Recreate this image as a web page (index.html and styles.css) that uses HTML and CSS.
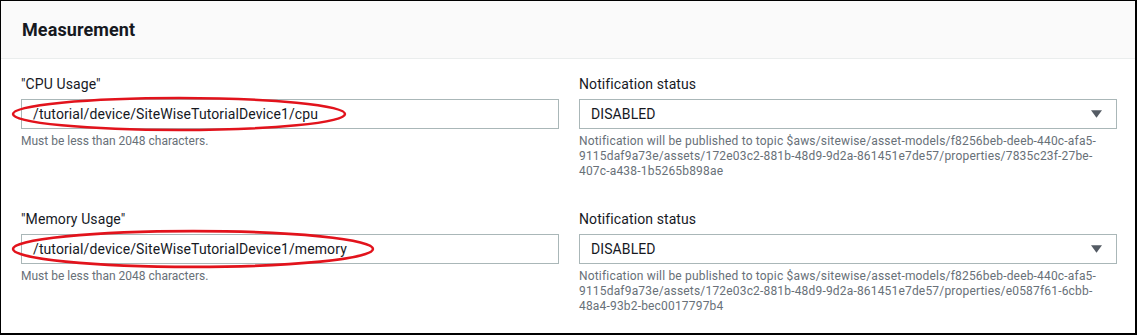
FILE: index.html
```html
<!DOCTYPE html>
<html lang="en">
<head>
    <meta charset="UTF-8">
    <title>Measurement</title>
    <link rel="stylesheet" href="styles.css">
</head>
<body>
    <div class="frame">
        <div class="panel-header">
            <h2>Measurement</h2>
        </div>
        <div class="panel-body">
            <div class="row">
                <div class="field">
                    <label>"CPU Usage"</label>
                    <div class="input-wrap">
                        <div class="text-input">/tutorial/device/SiteWiseTutorialDevice1/cpu</div>
                        <svg class="mark mark-cpu" viewBox="0 0 336 36" preserveAspectRatio="none">
                            <ellipse cx="168" cy="18" rx="166" ry="16" />
                        </svg>
                    </div>
                    <div class="hint">Must be less than 2048 characters.</div>
                </div>
                <div class="field">
                    <label>Notification status</label>
                    <div class="select">
                        <span>DISABLED</span>
                        <svg class="caret" viewBox="0 0 12 8"><path d="M0 0h12L6 8z" /></svg>
                    </div>
                    <div class="hint topic">Notification will be published to topic $aws/sitewise/asset-models/f8256beb-deeb-440c-afa5-9115daf9a73e/assets/172e03c2-881b-48d9-9d2a-861451e7de57/properties/7835c23f-27be-407c-a438-1b5265b898ae</div>
                </div>
            </div>
            <div class="row">
                <div class="field">
                    <label>"Memory Usage"</label>
                    <div class="input-wrap">
                        <div class="text-input">/tutorial/device/SiteWiseTutorialDevice1/memory</div>
                        <svg class="mark mark-mem" viewBox="0 0 364 38" preserveAspectRatio="none">
                            <ellipse cx="182" cy="19" rx="180" ry="17" />
                        </svg>
                    </div>
                    <div class="hint">Must be less than 2048 characters.</div>
                </div>
                <div class="field">
                    <label>Notification status</label>
                    <div class="select">
                        <span>DISABLED</span>
                        <svg class="caret" viewBox="0 0 12 8"><path d="M0 0h12L6 8z" /></svg>
                    </div>
                    <div class="hint topic">Notification will be published to topic $aws/sitewise/asset-models/f8256beb-deeb-440c-afa5-9115daf9a73e/assets/172e03c2-881b-48d9-9d2a-861451e7de57/properties/e0587f61-6cbb-48a4-93b2-bec0017797b4</div>
                </div>
            </div>
        </div>
    </div>
</body>
</html>
```

FILE: styles.css
```css
body {
    margin: 0;
    background: #fff;
    font-family: Roboto, "Open Sans", sans-serif;
    color: #16191f;
}

.frame {
    width: 1134px;
    height: 332px;
    border-top: 1px solid #000;
    border-left: 1px solid #000;
    border-right: 2px solid #000;
    border-bottom: 2px solid #000;
    background: #fff;
    overflow: hidden;
}

.panel-header {
    height: 57px;
    background: #fafafa;
    border-bottom: 1px solid #eaeded;
    display: flex;
    align-items: center;
    padding: 0 21px;
}

.panel-header h2 {
    margin: 0;
    font-size: 18px;
    font-weight: 700;
    letter-spacing: 0.1px;
    color: #16191f;
}

.panel-body {
    padding: 15px 18px 0 20px;
    display: flex;
    flex-direction: column;
    gap: 30px;
}

.row {
    display: grid;
    grid-template-columns: 538px 538px;
    gap: 20px;
}

.field label {
    display: block;
    font-size: 14px;
    line-height: 20px;
    letter-spacing: 0.1px;
    margin-bottom: 5px;
}

.input-wrap {
    position: relative;
}

.text-input, .select {
    box-sizing: border-box;
    height: 30px;
    border: 1px solid #aab7b8;
    padding: 0 11px;
    font-size: 14px;
    letter-spacing: 0.1px;
    display: flex;
    align-items: center;
}

.select {
    justify-content: space-between;
    padding-right: 14px;
}

.caret {
    width: 11px;
    height: 8px;
    fill: #545b64;
}

.hint {
    margin-top: 5px;
    font-size: 12px;
    line-height: 15px;
    color: #687078;
}

.hint.topic {
    letter-spacing: 0.18px;
}

/* red annotation rings drawn on top of the inputs */
.mark {
    position: absolute;
    fill: none;
    stroke: #e2131c;
    stroke-width: 2.5;
    overflow: visible;
}

.mark-cpu {
    left: -10px;
    top: -3px;
    width: 336px;
    height: 36px;
}

.mark-mem {
    left: -10px;
    top: -5px;
    width: 364px;
    height: 40px;
}
```
